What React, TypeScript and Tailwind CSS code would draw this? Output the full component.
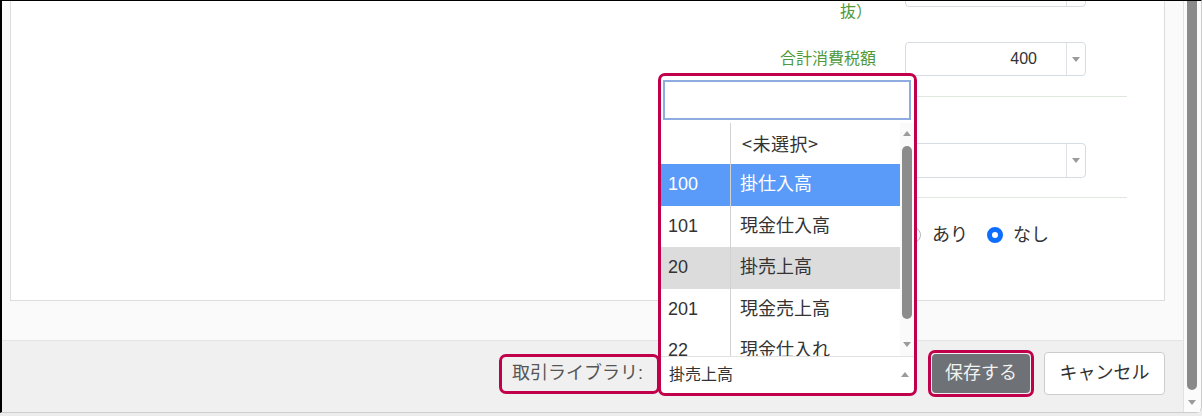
import React from "react";

const FONT = "font-['Liberation_Sans','Noto_Sans_CJK_JP',sans-serif]";

function Tri({ up = false }: { up?: boolean }) {
  return (
    <svg width="8" height="5" viewBox="0 0 8 5" className="block">
      <path d={up ? "M0 5 L4 0 L8 5 Z" : "M0 0 L8 0 L4 5 Z"} fill="#9b9b9b" />
    </svg>
  );
}

function Field({ value, h = "h-[34px]" }: { value?: string; h?: string }) {
  return (
    <div className={`flex ${h} w-[181px] rounded-[4px] border border-[#d6dce4] bg-white`}>
      <div className="flex flex-1 items-center justify-end pr-[29px] text-[16px] text-[#333]">{value}</div>
      <div className="flex w-[19px] items-center justify-center border-l border-[#dfe3e8]">
        <Tri />
      </div>
    </div>
  );
}

const rows: { code: string; name: string; tone?: "sel" | "hover" }[] = [
  { code: "", name: "<未選択>" },
  { code: "100", name: "掛仕入高", tone: "sel" },
  { code: "101", name: "現金仕入高" },
  { code: "20", name: "掛売上高", tone: "hover" },
  { code: "201", name: "現金売上高" },
  { code: "22", name: "現金仕入れ" },
];

function LibraryDropdown() {
  return (
    <div className="absolute bottom-[-2px] left-0 flex h-[323px] w-[259px] flex-col overflow-hidden rounded-[7px] border-[3px] border-[#c1004b] bg-white">
      {/* search box */}
      <div className="ml-[2px] mr-[3px] mt-[4px] h-[40px] border-2 border-[#8eacdf] bg-white" />
      {/* option list */}
      <div className="mt-[3px] flex h-[233px]">
        <div className="flex-1 overflow-hidden">
          {rows.map((r, i) => (
            <div
              key={i}
              className={`flex h-[41.5px] text-[18px] ${
                r.tone === "sel"
                  ? "bg-[#5a9af8] text-white"
                  : r.tone === "hover"
                  ? "bg-[#dcdcdc] text-[#333]"
                  : "bg-white text-[#333]"
              }`}
            >
              <div className="flex w-[70px] shrink-0 items-center border-r border-[#d2d2d2] pl-[7px]">{r.code}</div>
              <div
                className={`flex items-center pl-[9px] ${
                  r.code === "" ? "pl-[11px] font-['Noto_Sans_CJK_JP',sans-serif] tracking-[0.5px]" : ""
                }`}
              >
                {r.name}
              </div>
            </div>
          ))}
        </div>
        <div className="flex w-[14px] flex-col items-center bg-[#fafafa] pt-[8px]">
          <Tri up />
          <div className="mt-[10px] h-[173px] w-[10px] rounded-full bg-[#8c8c8c]" />
          <div className="mt-[23px]">
            <Tri />
          </div>
        </div>
      </div>
      {/* current value */}
      <div className="flex flex-1 items-center justify-between border-t border-[#e2e2e2] pl-[8px] pr-[5px] text-[16px] text-[#333]">
        <span>掛売上高</span>
        <Tri up />
      </div>
    </div>
  );
}

export default function App() {
  return (
    <div className={`relative h-[416px] w-[1202px] overflow-hidden bg-[#ececec] ${FONT}`}>
      <div className="flex h-[413px] rounded-br-[6px] border-b border-l-2 border-r border-t border-b-[#cdcdcd] border-l-black border-r-[#cdcdcd] border-t-black bg-[#fafafa]">
        {/* dialog body */}
        <div className="flex w-[1182px] shrink-0 flex-col border-r border-[#e2e2e2]">
          <div className="h-[339px] overflow-hidden bg-[#fafafa] pl-[8px] pr-[18px]">
            <div className="flex h-[300px] justify-end border-x border-b border-[#dddddd] bg-white pr-[37px]">
              <div className="flex w-[447px] flex-col">
                <div className="mt-[-28px] flex h-[34px]">
                  <div className="mr-[29px] mt-[6px] w-[196px] shrink-0 pr-[4px] text-right text-[16px] leading-[22px] text-[#4e9a3a]">
                    <div>小計（税</div>
                    <div>抜）</div>
                  </div>
                  <Field />
                </div>
                <div className="mt-[35px] flex h-[34px] items-center">
                  <div className="mr-[29px] w-[196px] shrink-0 text-right text-[16px] text-[#4e9a3a]">合計消費税額</div>
                  <Field value="400" />
                </div>
                <div className="mt-[20px] h-px bg-[#dfe8dc]" />
                <div className="mt-[46px] flex h-[35px] items-center">
                  <div className="mr-[29px] w-[196px] shrink-0" />
                  <Field h="h-[35px]" />
                </div>
                <div className="mt-[19px] h-px bg-[#dfe8dc]" />
                <div className="mt-[27px] flex h-[20px] items-center">
                  <div className="mr-[29px] w-[196px] shrink-0" />
                  <div className="flex items-center text-[18px] text-[#333]">
                    <span className="h-[16px] w-[16px] rounded-full border border-[#b5b5b5] bg-white" />
                    <span className="ml-[11px]">あり</span>
                    <span className="ml-[19px] h-[16px] w-[16px] rounded-full border-[5px] border-[#0d6efd] bg-white" />
                    <span className="ml-[10px]">なし</span>
                  </div>
                </div>
              </div>
            </div>
          </div>
          {/* footer */}
          <div className="flex h-[72px] items-center justify-end border-t border-[#e4e4e4] bg-[#f0f0f0] pb-[6px] pr-[18px]">
            <div className="flex h-[40px] w-[161px] items-center rounded-[7px] border-[3px] border-[#c1004b] pl-[10px] text-[18px] text-[#555]">
              取引ライブラリ:
            </div>
            <div className="relative -ml-[2px] h-[40px] w-[259px]">
              <LibraryDropdown />
            </div>
            <div className="ml-[11px] flex h-[47px] w-[106px] rounded-[7px] border-[3px] border-[#c1004b] p-px">
              <div className="flex flex-1 items-center justify-center rounded-[4px] bg-[#6e7276] text-[18px] text-[#f2f2f2]">
                保存する
              </div>
            </div>
            <div className="ml-[10px] flex h-[43px] w-[121px] items-center justify-center rounded-[4px] border border-[#cccccc] bg-white text-[18px] text-[#333]">
              キャンセル
            </div>
          </div>
        </div>
        {/* page scrollbar */}
        <div className="flex w-[16px] flex-col items-center bg-[#fbfbfb]">
          <div className="h-[389px] w-[10px] rounded-b-full bg-[#8a8a8a]" />
          <div className="mt-[10px]">
            <Tri />
          </div>
        </div>
      </div>
    </div>
  );
}
